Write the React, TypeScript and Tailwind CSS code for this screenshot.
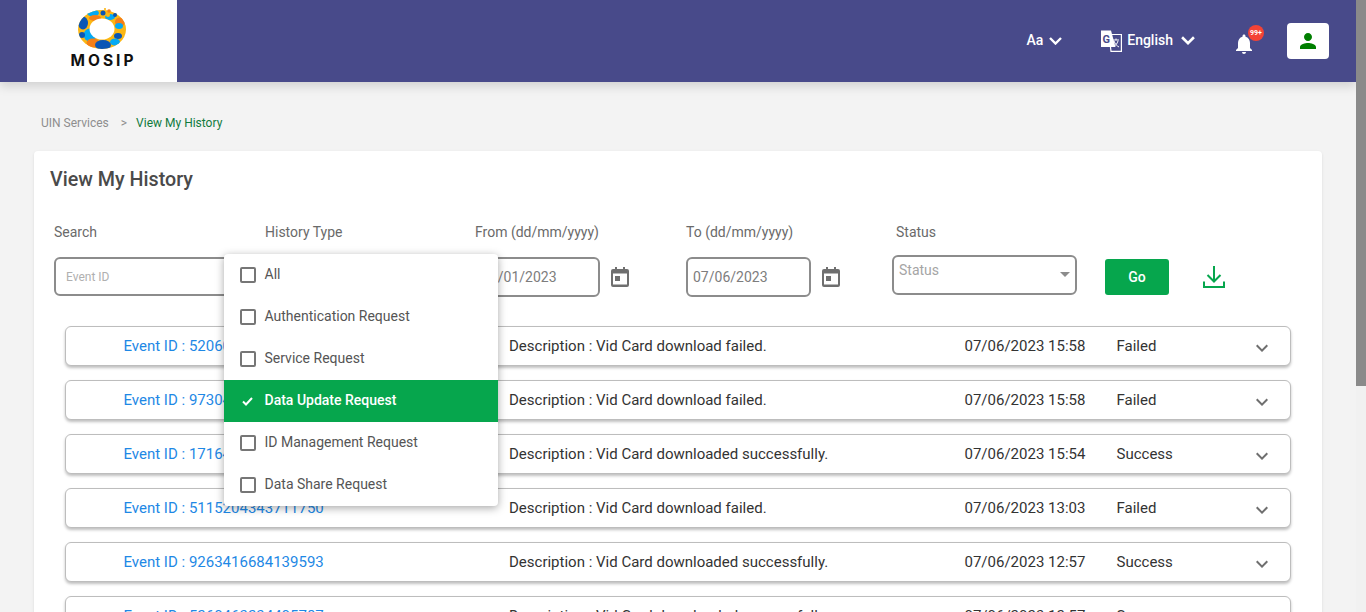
import React from 'react'
import { MdExpandMore, MdNotifications, MdPerson } from 'react-icons/md'

const historyRows = [
  { id: '5206043234405780', desc: 'Vid Card download failed.', time: '07/06/2023 15:58', status: 'Failed' },
  { id: '9730431168413959', desc: 'Vid Card download failed.', time: '07/06/2023 15:58', status: 'Failed' },
  { id: '1716420434371175', desc: 'Vid Card downloaded successfully.', time: '07/06/2023 15:54', status: 'Success' },
  { id: '5115204343711750', desc: 'Vid Card download failed.', time: '07/06/2023 13:03', status: 'Failed' },
  { id: '9263416684139593', desc: 'Vid Card downloaded successfully.', time: '07/06/2023 12:57', status: 'Success' },
  { id: '5260463234405787', desc: 'Vid Card downloaded successfully.', time: '07/06/2023 12:57', status: 'Success' }
]

const historyTypes = [
  { label: 'All', checked: false },
  { label: 'Authentication Request', checked: false },
  { label: 'Service Request', checked: false },
  { label: 'Data Update Request', checked: true },
  { label: 'ID Management Request', checked: false },
  { label: 'Data Share Request', checked: false }
]

function Logo() {
  return (
    <svg width="50" height="44" viewBox="0 0 50 44" className="block">
      <defs>
        <clipPath id="ring">
          <ellipse cx="25" cy="22.500" rx="24" ry="19.500" />
        </clipPath>
      </defs>
      <g clipPath="url(#ring)">
        <rect width="50" height="44" fill="#fbb714" />
        <ellipse cx="33" cy="10" rx="5" ry="3" fill="#03a9f4" />
        <ellipse cx="16" cy="6" rx="6" ry="3.500" fill="#03a9f4" />
        <ellipse cx="18" cy="11" rx="6" ry="3" fill="#f57f17" />
        <ellipse cx="6" cy="16" rx="5" ry="6.500" fill="#0a56b5" />
        <ellipse cx="43" cy="15" rx="5" ry="4.500" fill="#f57f17" />
        <ellipse cx="42" cy="19" rx="4" ry="3" fill="#03a9f4" />
        <ellipse cx="41" cy="29" rx="4" ry="3" fill="#0a56b5" />
        <ellipse cx="38" cy="35" rx="5" ry="3.500" fill="#03a9f4" />
        <ellipse cx="13" cy="28" rx="6.500" ry="6.500" fill="#03a9f4" />
        <ellipse cx="16" cy="36" rx="6.500" ry="4.500" fill="#f57f17" />
        <ellipse cx="26" cy="38" rx="8" ry="5" fill="#0a56b5" />
        <ellipse cx="5" cy="28" rx="3" ry="3" fill="#0a56b5" />
      </g>
      <ellipse cx="25" cy="22" rx="12.500" ry="10.500" fill="#fff" />
      <circle cx="26" cy="6" r="2.500" fill="#0a56b5" />
      <circle cx="38" cy="8" r="2" fill="#0a56b5" />
      <circle cx="31" cy="8" r="2" fill="#fbb714" />
      <circle cx="32" cy="4" r="1.800" fill="#f57f17" />
      <circle cx="28" cy="2" r="1.100" fill="#fbb714" />
    </svg>
  )
}

function HeaderChevron({ className }: { className: string }) {
  return (
    <svg viewBox="0 0 13 8" fill="none" stroke="#fff" strokeWidth="2.400" className={className}>
      <path d="M1 1l5.500 5.500L12 1" />
    </svg>
  )
}

function TranslateIcon() {
  return (
    <svg width="22" height="22" viewBox="0 0 22 22" className="block">
      <path d="M9 4.500h12.400v16.800H11z" fill="none" stroke="#fff" strokeWidth="1.200" />
      <path d="M1 0.500h10l4.500 16.500H1z" fill="#fff" />
      <text x="2.500" y="12.500" fontSize="11" fontWeight="700" fontFamily="Roboto, sans-serif" fill="#484a8a">G</text>
      <path d="M13 10h6M16 8.500v1.500M14 11c1 3 3 5 5 6M18 11c-1 3-2 4-4 5" fill="none" stroke="#fff" strokeWidth="1" />
    </svg>
  )
}

function CalendarIcon() {
  return (
    <svg width="18" height="20" viewBox="0 0 18 20" className="block">
      <path d="M4 0h2v2h6V0h2v2h2a2 2 0 0 1 2 2v14a2 2 0 0 1-2 2H2a2 2 0 0 1-2-2V4a2 2 0 0 1 2-2h2z" fill="#6f6f6f" />
      <rect x="2" y="6.500" width="14" height="11" fill="#fff" />
      <rect x="4" y="9" width="5" height="5" fill="#6f6f6f" />
    </svg>
  )
}

function DownloadIcon() {
  return (
    <svg width="22" height="22" viewBox="0 0 22 22" fill="none" stroke="#06a64d" strokeWidth="2" className="block">
      <path d="M11 0v15M4.500 9l6.500 6.500L17.500 9M1 15.500V21h20v-5.500" />
    </svg>
  )
}

function DateField({ value, className }: { value: string; className: string }) {
  return (
    <div className="flex items-center gap-[11px]">
      <div className={`h-[40px] rounded-[6px] border-2 border-[#8c8c8c] bg-white pl-[5px] flex items-center text-[14px] text-[#7d7d7d] ${className}`}>
        {value}
      </div>
      <CalendarIcon />
    </div>
  )
}

function HistoryRow({ id, desc, time, status }: { id: string; desc: string; time: string; status: string }) {
  return (
    <div className="flex items-center h-[40px] mb-[14px] rounded-[6px] border border-[#bdbdbd] bg-white shadow-[0_2px_3px_rgba(0,0,0,0.25)] text-[15px] text-[#333]">
      <div className="w-[443px] pl-[57.500px] text-[#1e88e5]">Event ID : {id}</div>
      <div className="w-[455.500px]">Description : {desc}</div>
      <div className="w-[152px]">{time}</div>
      <div className="w-[133.500px]">{status}</div>
      <MdExpandMore className="w-[24px] h-[24px] text-[#6f6f6f] mt-[4px]" />
    </div>
  )
}

function HistoryDropdown() {
  return (
    <div className="absolute left-[224px] top-[254px] w-[274px] h-[252px] rounded-[4px] bg-white overflow-hidden shadow-[0_2px_8px_rgba(0,0,0,0.35)] z-10">
      {historyTypes.map((item) => (
        <div
          key={item.label}
          className={`flex items-center h-[42px] pl-[16px] text-[14px] ${item.checked ? 'bg-[#06a64d] text-white font-medium' : 'text-[#555]'}`}
        >
          {item.checked ? (
            <svg width="16" height="16" viewBox="0 0 16 16" className="block" fill="none" stroke="#fff" strokeWidth="2">
              <path d="M3 8.500l3 3 6-6.500" />
            </svg>
          ) : (
            <span className="block w-[16px] h-[16px] rounded-[2px] border-2 border-[#767676]" />
          )}
          <span className="ml-[8.500px] mb-[2px]">{item.label}</span>
        </div>
      ))}
    </div>
  )
}

export default function App() {
  return (
    <div className="relative flex h-[612px] overflow-hidden bg-[#f3f3f3] font-['Roboto',sans-serif]">
      <div className="flex-1 min-w-0">
        <header className="h-[82px] bg-[#484a8a] flex items-center pl-[27px] pr-[27px] shadow-[0_4px_10px_rgba(0,0,0,0.15)] text-white">
          <div className="w-[150px] h-[82px] bg-white flex flex-col items-center pt-[7px]">
            <Logo />
            <span className="mt-[1px] ml-[3px] text-[15.500px] leading-[18px] font-bold tracking-[3px] text-[#111] font-['Inter',sans-serif]">MOSIP</span>
          </div>
          <div className="ml-auto flex items-center text-[14px]">
            <span className="mb-[2px] font-medium">Aa</span>
            <HeaderChevron className="w-[13px] h-[8px] ml-[6px] mb-[1px]" />
            <div className="ml-[38px]">
              <TranslateIcon />
            </div>
            <span className="ml-[5px] mb-[2px] font-medium">English</span>
            <HeaderChevron className="w-[14px] h-[9px] ml-[8px] mb-[1px]" />
            <div className="relative ml-[37px] mt-[6px]">
              <MdNotifications className="w-[24px] h-[24px]" />
              <span className="absolute -top-[7px] left-[16px] w-[16px] h-[16px] rounded-full bg-[#f44336] text-[7px] font-bold leading-[16px] text-center">99+</span>
            </div>
            <div className="ml-[31px] w-[42px] h-[36px] rounded-[4px] bg-white flex items-center justify-center">
              <MdPerson className="w-[24px] h-[24px] text-[#007f00]" />
            </div>
          </div>
        </header>

        <nav className="mt-[33px] pl-[41px] h-[16px] flex items-center text-[12px]">
          <span className="text-[#8e8e8e]">UIN Services</span>
          <span className="ml-[12px] text-[#8e8e8e]">&gt;</span>
          <span className="ml-[9px] text-[#117a3d]">View My History</span>
        </nav>

        <main className="mt-[20px] ml-[34px] w-[1288px] h-[600px] rounded-[4px] bg-white shadow-[0_1px_3px_rgba(0,0,0,0.1)] pt-[16px]">
          <h1 className="pl-[16px] text-[19.700px] leading-[26px] font-medium text-[#4a4a4a]">View My History</h1>

          <div className="mt-[29px] pl-[20px] flex text-[14px] leading-[20px] text-[#6a6a6a]">
            <span className="w-[211px]">Search</span>
            <span className="w-[210px]">History Type</span>
            <span className="w-[211px]">From (dd/mm/yyyy)</span>
            <span className="w-[210px]">To (dd/mm/yyyy)</span>
            <span>Status</span>
          </div>

          <div className="mt-[13px] pl-[20px] flex items-start">
            <div className="w-[190px] h-[39px] mt-[2px] rounded-[6px] border-2 border-[#8c8c8c] bg-white pl-[10px] flex items-center text-[12px] text-[#b0b0b0]">
              Event ID
            </div>
            <div className="ml-[231px] mt-[2px]">
              <DateField value="07/01/2023" className="w-[125px]" />
            </div>
            <div className="ml-[57px] mt-[2px]">
              <DateField value="07/06/2023" className="w-[125px]" />
            </div>
            <div className="relative ml-[52px] w-[185px] h-[40px] rounded-[6px] border-2 border-[#8c8c8c] bg-white pl-[5px] pt-[3px] text-[14px] leading-[20px] text-[#a5a5a5]">
              Status
              <span className="absolute right-[5px] top-[15px] w-0 h-0 border-x-[5px] border-x-transparent border-t-[5px] border-t-[#8c8c8c]" />
            </div>
            <div className="ml-[28px] mt-[4px] w-[64px] h-[36px] rounded-[3px] bg-[#06a64d] text-white text-[14px] font-medium flex items-center justify-center">
              Go
            </div>
            <div className="ml-[34px] mt-[11px]">
              <DownloadIcon />
            </div>
          </div>

          <div className="mt-[29px] ml-[31px] w-[1226px]">
            {historyRows.map((row) => (
              <HistoryRow key={row.id} {...row} />
            ))}
          </div>
        </main>
      </div>

      <div className="w-[10px] bg-[#f1f1f1]">
        <div className="h-[386px] bg-[#8a8a8a]" />
      </div>

      <HistoryDropdown />
    </div>
  )
}
